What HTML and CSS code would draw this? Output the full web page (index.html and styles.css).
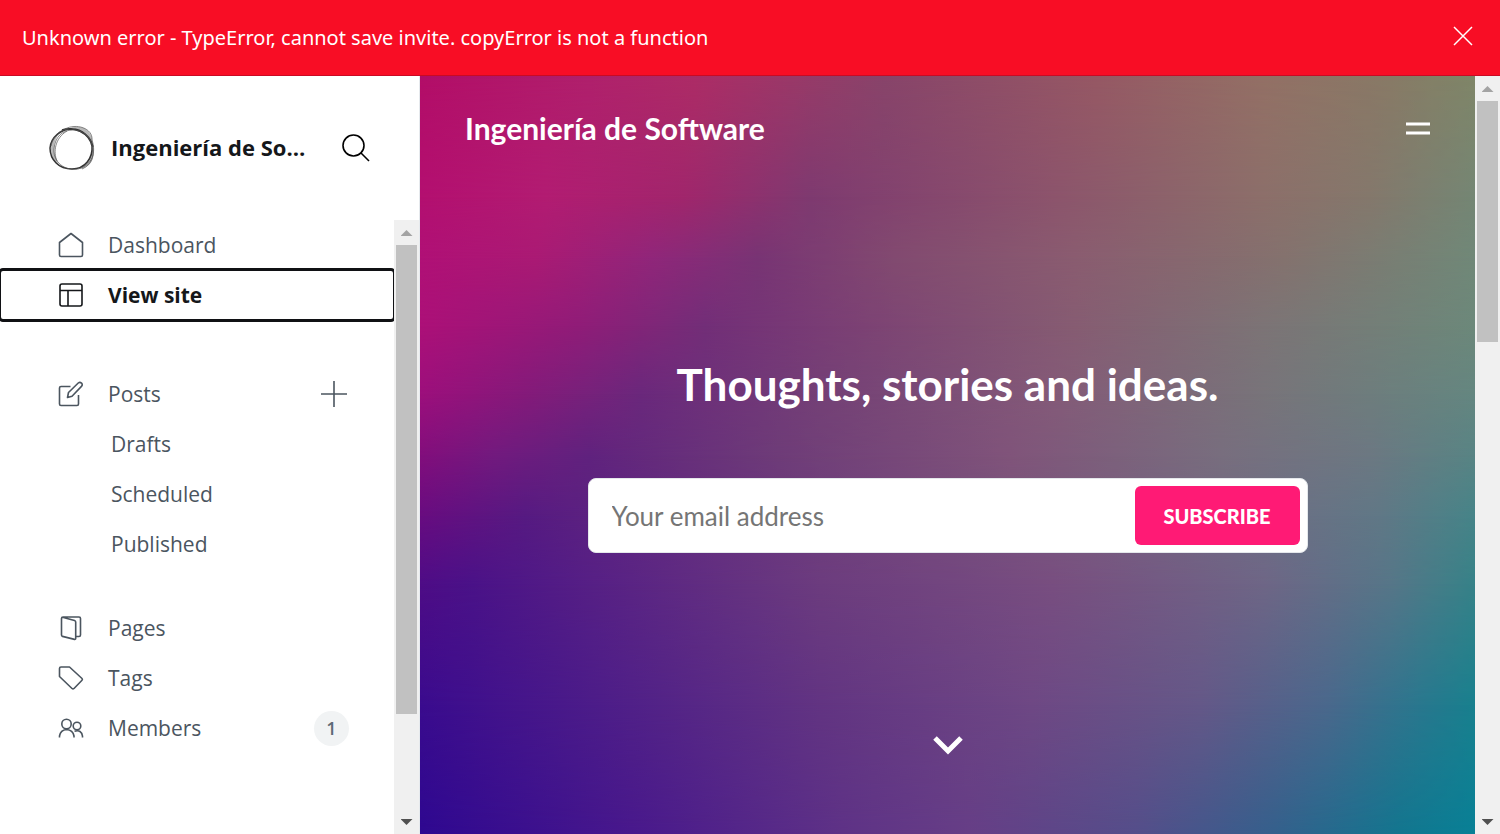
FILE: index.html
```html
<!DOCTYPE html>
<html lang="en">
<head>
<meta charset="utf-8">
<meta name="viewport" content="width=device-width, initial-scale=1">
<title>Ingeniería de Software</title>
<link rel="stylesheet" href="styles.css">
</head>
<body>
<div class="alert" role="alert">
  <span class="alert-text">Unknown error - TypeError, cannot save invite. copyError is not a function</span>
  <button class="alert-close" type="button" aria-label="Close"><svg width="20" height="20" viewBox="0 0 20 20"><path d="M1 1l18 18M19 1L1 19"/></svg></button>
</div>
<div class="app">
  <aside class="sidebar">
    <header class="brand">
      <svg class="brand-logo" width="46" height="46" viewBox="0 0 46 46" aria-hidden="true">
        <path class="shade" d="M15 4C7 8 2 16 2 24c0 9 5 16 11 19C8 38 5 31 5 24 5 15 9 8 15 4z"/>
        <path class="shade" d="M19 4C28-1 40 2 43 13l1 9C41 12 33 5 19 4z"/>
        <path class="shade" d="M44 20c3 13-2 23-14 24 7-4 12-11 13-20z"/>
        <path class="dark" d="M13 5C24 1 40 7 43 21c1 12-7 23-20 23C10 44 1 35 1 23 2 12 12 4 23 4c10 0 19 8 21 18"/>
        <path class="mid" d="M16 4C27-2 44 3 43 15c4 12 1 25-14 29C12 46 4 34 5 24 6 12 13 5 24 5c9 0 17 6 19 15 3 10 0 20-10 24"/>
        <path class="mid" d="M2 21C4 10 12 4 20 4M8 36C4 27 6 13 18 6"/>
      </svg>
      <h1 class="brand-name">Ingeniería de Software</h1>
      <button class="brand-search" type="button" aria-label="Search"><svg width="28" height="28" viewBox="0 0 28 28"><circle cx="11.500" cy="11.500" r="10.500"/><path d="M19 19l8 8"/></svg></button>
    </header>
    <div class="side-body">
      <nav class="nav" aria-label="Main">
        <ul class="nav-group">
          <li class="nav-row"><a class="nav-link" href="#dashboard"><svg class="icon" viewBox="0 0 26 26"><path d="M1.500 10.500L13 1.500l11.500 9V23q0 1.500-1.500 1.500H3Q1.500 24.500 1.500 23z"/></svg>Dashboard</a></li>
          <li class="nav-row"><a class="nav-link active" href="#site" aria-current="page"><svg class="icon" viewBox="0 0 26 26"><rect x="2" y="2" width="22" height="22" rx="2"/><path d="M2 8.500h22M10 8.500V24"/></svg>View site</a></li>
        </ul>
        <ul class="nav-group">
          <li class="nav-row"><a class="nav-link" href="#posts"><svg class="icon" viewBox="0 0 26 26"><path d="M12.500 5.500H3Q1.500 5.500 1.500 7v16q0 1.500 1.500 1.500h16q1.500 0 1.500-1.500v-9M9.500 16.500l1-5L20.500 1.800q1.500-1 3 .3 1.300 1.500.2 3L14 15.200z"/></svg>Posts</a><a class="nav-add" href="#new" aria-label="New post"><svg width="28" height="28" viewBox="0 0 28 28"><path d="M14 1v26M1 14h26"/></svg></a></li>
          <li class="nav-row"><a class="nav-link sub" href="#drafts">Drafts</a></li>
          <li class="nav-row"><a class="nav-link sub" href="#scheduled">Scheduled</a></li>
          <li class="nav-row"><a class="nav-link sub" href="#published">Published</a></li>
        </ul>
        <ul class="nav-group tight">
          <li class="nav-row"><a class="nav-link" href="#pages"><svg class="icon" viewBox="0 0 26 26"><path d="M18.500 21.500H21q1.500 0 1.500-1.500V3.500Q22.500 2 21 2H5Q3.500 2 3.500 3.500V20q0 1 1 1.400l12 3q1.200.2 1.200-1V7q0-1-1.200-1.500L4.500 2.200"/></svg>Pages</a></li>
          <li class="nav-row"><a class="nav-link" href="#tags"><svg class="icon" viewBox="0 0 26 26"><path d="M3 2h8.500L24 13.500q.8 1 0 1.800l-8 8.200q-1 .8-2 0L1.500 11.500v-8Q1.500 2 3 2z"/></svg>Tags</a></li>
          <li class="nav-row"><a class="nav-link" href="#members"><svg class="icon" viewBox="0 0 26 26"><circle cx="8.500" cy="9" r="4.700"/><path d="M1.500 22.500v-1.500q1-6 7-6.500 6.500.5 7.500 6.500v1.500M16.500 16.200q7-2 8 5v1.300"/><circle cx="19" cy="11" r="3.800"/></svg>Members</a><span class="badge">1</span></li>
        </ul>
      </nav>
      <div class="scroll" aria-hidden="true"><i class="arrow up"></i><i class="thumb"></i><i class="arrow down"></i></div>
    </div>
  </aside>
  <main class="site">
    <div class="hero">
      <div class="mesh" aria-hidden="true"><i class="m m0"></i><i class="m m1"></i><i class="m m2"></i><i class="m m3"></i><i class="m m4"></i><i class="m m5"></i><i class="m m6"></i><i class="m m7"></i><i class="m m8"></i><i class="m m9"></i></div>
      <header class="hero-head">
        <a class="hero-brand" href="#home">Ingeniería de Software</a>
        <button class="burger" type="button" aria-label="Menu"><i></i><i></i></button>
      </header>
      <section class="hero-main">
        <h2 class="hero-title">Thoughts, stories and ideas.</h2>
        <form class="subscribe">
          <input class="email" type="email" placeholder="Your email address" aria-label="Your email address">
          <button class="submit" type="submit">SUBSCRIBE</button>
        </form>
      </section>
      <a class="hero-down" href="#posts-list" aria-label="Scroll down"><svg width="32" height="20" viewBox="0 0 32 20"><path d="M3 3l13 13L29 3"/></svg></a>
    </div>
    <div class="scroll site-scroll" aria-hidden="true"><i class="arrow up"></i><i class="thumb"></i><i class="arrow down"></i></div>
  </main>
</div>
</body>
</html>
```
FILE: styles.css
```css
* { box-sizing: border-box; }
body {
  margin: 0;
  height: 100vh;
  display: flex;
  flex-direction: column;
  overflow: hidden;
  background: #fff;
  color: #15171a;
  font-family: "Open Sans", "Noto Sans", sans-serif;
  font-size: 21px;
}
button { border: 0; padding: 0; background: none; font: inherit; cursor: pointer; }
a { color: inherit; text-decoration: none; }
svg { display: block; flex: none; fill: none; stroke: currentColor; }
h1, h2, ul { margin: 0; padding: 0; list-style: none; }

.alert {
  display: flex;
  align-items: center;
  justify-content: space-between;
  flex: none;
  height: 76px;
  padding: 0 27px 0 22px;
  background: #f80d25;
  border-bottom: 1px solid #c90a24;
  color: #fff;
}
.alert-text { font-family: "Noto Sans", "Open Sans", sans-serif; font-size: 20px; }
.alert-close { color: #fff; padding-bottom: 4px; }
.alert-close svg { stroke-width: 1.500; }

.app { display: flex; flex: 1; min-height: 0; }
.sidebar {
  display: flex;
  flex-direction: column;
  flex: none;
  width: 420px;
  border-right: 1px solid #e5e9ed;
}
.brand {
  display: flex;
  align-items: center;
  flex: none;
  height: 144px;
  padding: 0 49px 0 49px;
}
.brand-name {
  flex: 1;
  min-width: 0;
  margin: 0 33px 0 16px;
  padding-bottom: 2px;
  overflow: hidden;
  white-space: nowrap;
  text-overflow: ellipsis;
  font-size: 22px;
  font-weight: 700;
}
.brand-search svg { stroke-width: 1.600; }
.shade { fill: #888; stroke: none; opacity: .6; }
.dark { stroke: #333; stroke-width: 1.500; }
.mid { stroke: #555; stroke-width: 1; opacity: .7; }

.side-body { display: flex; flex: 1; min-height: 0; }
.nav { flex: 1; overflow: hidden; color: #4b555f; }
.nav-group { margin-bottom: 49px; }
.nav-group.tight { margin-top: -15px; }
.nav-row { display: flex; align-items: center; position: relative; }
.nav-link {
  display: flex;
  align-items: center;
  gap: 24px;
  flex: 1;
  height: 50px;
  padding-left: 58px;
}
.nav-link.sub { padding-left: 111px; }
.nav-link.active {
  outline: 3px solid #101114;
  outline-offset: -1px;
  border-radius: 3px;
  color: #15171a;
  font-weight: 700;
}
.icon { width: 26px; height: 26px; stroke-width: 1.600; stroke-linejoin: round; }
.nav-add { position: absolute; right: 46px; }
.nav-add svg { stroke-width: 1.600; }
.badge {
  position: absolute;
  right: 45px;
  width: 35px;
  line-height: 35px;
  border-radius: 50%;
  background: #f1f3f4;
  color: #5d6a76;
  font-size: 18px;
  font-weight: 600;
  text-align: center;
}

.scroll {
  display: flex;
  flex-direction: column;
  align-items: center;
  flex: none;
  width: 25px;
  background: #f0f0f0;
}
.arrow { flex: none; width: 25px; height: 25px; }
.arrow::after {
  content: "";
  display: block;
  margin: 10px auto 0;
  width: 12px;
  height: 6px;
  background: #a3a3a3;
  clip-path: polygon(50% 0, 100% 100%, 0 100%);
}
.arrow.down { margin-top: auto; }
.arrow.down::after { background: #505050; clip-path: polygon(0 0, 100% 0, 50% 100%); }
.thumb { width: 21px; height: 83%; max-height: 469px; background: #c1c1c1; }
.site-scroll .thumb { height: 32%; max-height: 241px; }

.site { display: flex; flex: 1; min-width: 0; }
.hero {
  position: relative;
  display: flex;
  flex-direction: column;
  flex: 1;
  min-width: 0;
  color: #fff;
  font-family: Lato, "Open Sans", sans-serif;
}
.hero-head {
  display: flex;
  align-items: center;
  justify-content: space-between;
  height: 104px;
  padding: 0 45px;
  position: relative;
}
.hero-brand { font-size: 30px; font-weight: 700; }
.burger { display: grid; gap: 5px; }
.burger i { width: 24px; height: 4px; border: solid rgba(255, 255, 255, .5); border-width: 1px 0; background: #fff; background-clip: padding-box; }
.hero-main {
  position: relative;
  display: flex;
  flex-direction: column;
  align-items: center;
  justify-content: center;
  flex: 1;
  padding-bottom: 8px;
}
.hero-title { font-size: 44px; line-height: 60px; font-weight: 700; margin-bottom: 64px; }
.subscribe {
  display: flex;
  width: 720px;
  max-width: 90%;
  height: 75px;
  padding: 7px;
  border: 1px solid #e4e7eb;
  border-radius: 8px;
  background: #fff;
}
.email {
  flex: 1;
  min-width: 0;
  padding: 0 16px;
  border: 0;
  background: none;
  outline: 0;
  font: 26px Lato, "Open Sans", sans-serif;
}
.email::placeholder { color: #757575; }
.submit {
  width: 165px;
  border-radius: 6px;
  background: #ff1a75;
  color: #fff;
  font-size: 20px;
  font-weight: 900;
}
.hero-down { position: relative; align-self: center; padding-bottom: 79px; }
.hero-down svg { stroke-width: 5; }

/* Each row is a horizontal ramp that fades in over the one above it. */
.mesh { position: absolute; inset: 0; }
.m { position: absolute; inset: 0; }
.m0 { background: linear-gradient(90deg, #b30d68, #b0206c 16%, #ad2c66 26%, #88446a 44%, #965864 64%, #937065 80%, #887a66 92%, #7f8668); }
.m1 { background: linear-gradient(90deg, #b30f70, #b21c72 12%, #a0266c 25%, #7e3a70 37%, #8c546c 60%, #8c6f6a 80%, #84786c 90%, #748674); mask-image: linear-gradient(transparent 0%, #000 16%); }
.m2 { background: linear-gradient(90deg, #b01076, #aa1a74 11%, #90267a 22%, #783474 32%, #824a70 45%, #8a5c70 62%, #84726e 82%, #708878); mask-image: linear-gradient(transparent 16%, #000 24%); }
.m3 { background: linear-gradient(90deg, #ac1078, #901c78 15%, #722e78 27%, #7c4274 42%, #865c72 62%, #7c7476 80%, #6c887a); mask-image: linear-gradient(transparent 24%, #000 33%); }
.m4 { background: linear-gradient(90deg, #9c0f7c, #841a7a 10%, #6a287c 21%, #744076 38%, #845a78 60%, #78747a 80%, #648680); mask-image: linear-gradient(transparent 33%, #000 42%); }
.m5 { background: linear-gradient(90deg, #820e7c, #721a7e 7%, #60227e 16%, #6e3c78 34%, #80547a 56%, #786e7e 76%, #6c7882 90%, #588484); mask-image: linear-gradient(transparent 42%, #000 50%); }
.m6 { background: linear-gradient(90deg, #680c80, #561a82 10%, #66307e 28%, #764a7c 48%, #7a5c7e 64%, #6e6e84 80%, #607886 91%, #468488); mask-image: linear-gradient(transparent 50%, #000 58%); }
.m7 { background: linear-gradient(90deg, #4e0c86, #4a1288 5%, #5a2484 20%, #6c3c7e 38%, #784e80 60%, #6e6686 80%, #567688 92%, #368288); mask-image: linear-gradient(transparent 58%, #000 67%); }
.m8 { background: linear-gradient(90deg, #3a0b8e, #502088 20%, #623482 38%, #6e4884 58%, #645888 74%, #4a688c 86%, #28788e 95%, #18808e); mask-image: linear-gradient(transparent 67%, #000 83%); }
.m9 { background: linear-gradient(90deg, #2e0890, #48188c 20%, #5e3286 40%, #663e86 52%, #544e8a 68%, #34608c 81%, #12768f 93%, #088096); mask-image: linear-gradient(transparent 83%, #000 100%); }
```
